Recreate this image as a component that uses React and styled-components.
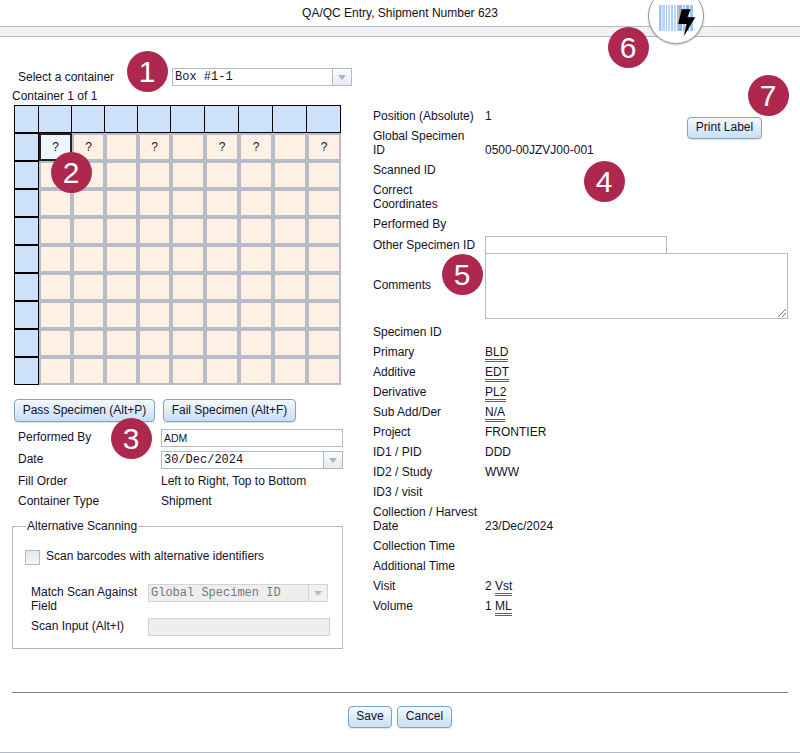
import React from "react";
import styled, { createGlobalStyle } from "styled-components";

const Global = createGlobalStyle`
  html, body { margin: 0; padding: 0; background: #fff; }
  body { font-family: "Liberation Sans", Arial, sans-serif; font-size: 12px; line-height: 14px; color: #12122a; }
  * { box-sizing: border-box; }
`;

const Page = styled.div`
  position: relative;
  width: 800px;
  height: 753px;
  overflow: hidden;
`;
const Title = styled.div`
  height: 26px;
  display: flex;
  align-items: center;
  justify-content: center;
  color: #111;
`;
const Band = styled.div`
  height: 11px;
  background: #f0f2f5;
  border-top: 1px solid #b1b9c9;
  border-bottom: 1px solid #b1b9c9;
`;
const Main = styled.div`
  display: grid;
  grid-template-columns: 361px 1fr;
  height: 656px;
  border-bottom: 1px solid #808080;
  margin: 0 12px;
`;
const Left = styled.div`
  padding-top: 31px;
  width: 345px;
`;
const Right = styled.div`
  padding-top: 69px;
  width: 415px;
`;
const SelectRow = styled.div`
  display: flex;
  align-items: center;
  height: 18px;
  padding-left: 6px;
  gap: 58px;
`;
const Combo = styled.div`
  display: flex;
  width: ${p => p.$w}px;
  height: 18px;
  border: 1px solid ${p => (p.$off ? "#d4d4d4" : "#b1b9c9")};
  background: ${p => (p.$off ? "#eeeeee" : "#fff")};
  font-family: "Liberation Mono", monospace;
  font-size: 12px;
  color: ${p => (p.$off ? "#777" : "#12122a")};
`;
const ComboText = styled.div`
  flex: 1;
  padding-left: 2px;
  line-height: 16px;
  white-space: pre;
`;
const ComboArrow = styled.div`
  width: 19px;
  border-left: 1px solid ${p => (p.$off ? "#d4d4d4" : "#b1b9c9")};
  background: ${p => (p.$off ? "#f1f1f1" : "linear-gradient(#fbfcfd, #e6e9ee)")};
  display: flex;
  align-items: center;
  justify-content: center;
  &::after {
    content: "";
    border-left: 4px solid transparent;
    border-right: 4px solid transparent;
    border-top: 5px solid ${p => (p.$off ? "#bbb" : "#a3b3cc")};
  }
`;
const Caption = styled.div`
  height: 14px;
  margin: 3px 0 2px;
`;
const GridBox = styled.div`
  display: grid;
  grid-template-columns: 24px 33px 33px 33px 33px 34px 34px 34px 34px 34px;
  grid-template-rows: repeat(10, 28px);
  width: 326px;
  margin-left: 2px;
`;
const HeadCell = styled.div`
  background: #cde2f8;
  border: 1px solid #000;
  margin-right: -1px;
`;
const Cell = styled.div`
  background: ${p => (p.$sel ? "#f0f6fd" : "#fef1e4")};
  border: 2px solid ${p => (p.$sel ? "#222" : "#b8bcc8")};
  margin: 0 -1px 0 1px;
  position: relative;
  z-index: ${p => (p.$sel ? 1 : 0)};
  display: flex;
  align-items: center;
  justify-content: center;
  font-size: 12px;
`;
const ButtonRow = styled.div`
  display: flex;
  gap: 8px;
  margin: 14px 0 5px 2px;
`;
const Btn = styled.button`
  height: ${p => p.$h || 23}px;
  width: ${p => p.$w}px;
  padding: 0 0 2px;
  border: 1px solid #7fa3c7;
  border-radius: 4px;
  background: linear-gradient(#f4f8fc, #c7dff5);
  font: 12px/14px "Liberation Sans", Arial, sans-serif;
  color: #12122a;
  box-shadow: 0 1px 1px rgba(0,0,0,.12);
`;
const FormRow = styled.div`
  display: grid;
  grid-template-columns: 143px auto;
  align-items: center;
  height: ${p => p.$h || 20}px;
  padding-left: 6px;
`;
const FormLabel = styled.span`
  padding-bottom: ${p => p.$lift || 0}px;
`;
const TextBox = styled.div`
  width: ${p => p.$w}px;
  height: 18px;
  border: 1px solid ${p => (p.$off ? "#d4d4d4" : "#b1b9c9")};
  background: ${p => (p.$off ? "#eeeeee" : "#fff")};
  padding-left: 2px;
  font-size: 10.5px;
  line-height: 16px;
`;
const Fieldset = styled.fieldset`
  margin: 8px 0 0;
  padding: 0;
  width: 331px;
  height: 130px;
  border: 1px solid #b1b9c9;
`;
const Legend = styled.legend`
  margin-left: 13px;
  padding: 0 1px;
  font-size: 12px;
  line-height: 14px;
`;
const CheckRow = styled.div`
  display: flex;
  gap: 6px;
  margin: 17px 0 0 12px;
  height: 15px;
  line-height: 12px;
`;
const CheckBox = styled.div`
  width: 15px;
  height: 15px;
  border: 1px solid #b1b9c9;
  background: linear-gradient(#dfe8f2, #f6f8fb);
`;
const ScanRow = styled.div`
  display: grid;
  grid-template-columns: 117px auto;
  align-items: start;
  padding-left: 18px;
  margin-top: ${p => p.$mt}px;
  height: ${p => p.$h}px;
`;
const ScanLabel = styled.span`
  padding-top: 1px;
`;
const InfoRow = styled.div`
  display: grid;
  grid-template-columns: 112px 1fr;
  align-items: end;
  padding: 3px 0;
  height: ${p => p.$h || 20}px;
`;
const InputRow = styled(InfoRow)`
  padding: 2px 0 0;
  align-items: center;
`;
const CommentRow = styled(InfoRow)`
  padding: 0 0 3px;
  margin-top: -1px;
  align-items: center;
`;
const Label = styled.div`
  width: 105px;
  white-space: ${p => (p.$nowrap ? "nowrap" : "normal")};
  padding-bottom: ${p => p.$lift || 0}px;
`;
const Area = styled.div`
  position: relative;
  width: 303px;
  height: 66px;
  border: 1px solid #b1b9c9;
  &::after {
    content: "";
    position: absolute;
    right: 1px;
    bottom: 1px;
    width: 9px;
    height: 9px;
    background: linear-gradient(135deg, transparent 50%, #777 50%, #777 58%, transparent 58%, transparent 74%, #777 74%, #777 82%, transparent 82%);
  }
`;
const Coded = styled.span`
  border-bottom: 3px double #9c5208;
`;
const Footer = styled.div`
  display: flex;
  justify-content: center;
  gap: 5px;
  padding-top: 13px;
  height: 59px;
`;
const BottomLine = styled.div`
  height: 1px;
  background: #b1b9c9;
`;
const Badge = styled.div`
  position: absolute;
  left: ${p => p.$x - 20.5}px;
  top: ${p => p.$y - 20.5}px;
  width: 41px;
  height: 41px;
  border-radius: 50%;
  background: #ae274f;
  color: #fff;
  font-size: 30px;
  line-height: 41px;
  text-align: center;
  z-index: 5;
`;
const Logo = styled.div`
  position: absolute;
  left: 648px;
  top: -12px;
  width: 56px;
  height: 56px;
  border-radius: 50%;
  background: #fff;
  border: 1px solid #999;
  box-shadow: 0 1px 2px rgba(0,0,0,.25);
  z-index: 5;
`;
const LogoSvg = styled.svg`
  position: absolute;
  left: 10px;
  top: 16px;
`;
const FloatBtn = styled(Btn)`
  position: absolute;
  left: 687px;
  top: 117px;
  z-index: 4;
`;

const Q = new Set([0, 1, 3, 5, 6, 8]);
const bars = [[0,2,"#9fc6f3"],[2,2,"#d4dcfb"],[4,2,"#b6d2f7"],[7,1,"#9fc6f3"],[9,2,"#c4d4f6"],[12,2,"#a9cdf5"],[15,2,"#c3d6f8"],[18,2,"#9fc6f3"],[20,3,"#86b6ee"],[24,2,"#9fc6f3"],[27,3,"#86b6ee"],[31,3,"#9fc6f3"]];
const BOLT = "M22.7 4.3 H31.7 L28.3 12.3 H36.3 L25 31 L27.7 19 H19.3 Z";

function BarLogo() {
  return (
    <Logo>
      <LogoSvg width="38" height="32" viewBox="0 0 38 32">
        {bars.map(([x, w, c]) => <rect key={x} x={x} y="0" width={w} height="26" fill={c} />)}
        <path d={BOLT} fill="#e8921e" transform="translate(-.7 0)" />
        <path d={BOLT} fill="#000" />
      </LogoSvg>
    </Logo>
  );
}

export default function App() {
  const cells = [];
  for (let r = 0; r < 10; r++) {
    for (let c = 0; c < 10; c++) {
      if (r === 0 || c === 0) cells.push(<HeadCell key={r + "-" + c} />);
      else cells.push(<Cell key={r + "-" + c} $sel={r === 1 && c === 1}>{r === 1 && Q.has(c - 1) ? "?" : ""}</Cell>);
    }
  }
  return (
    <Page>
      <Global />
      <Title>QA/QC Entry, Shipment Number 623</Title>
      <Band />
      <Main>
        <Left>
          <SelectRow>
            <span>Select a container</span>
            <Combo $w={180}><ComboText>Box #1-1</ComboText><ComboArrow /></Combo>
          </SelectRow>
          <Caption>Container 1 of 1</Caption>
          <GridBox>{cells}</GridBox>
          <ButtonRow>
            <Btn $w={141}>Pass Specimen (Alt+P)</Btn>
            <Btn $w={133}>Fail Specimen (Alt+F)</Btn>
          </ButtonRow>
          <FormRow $h={22}><FormLabel $lift={2}>Performed By</FormLabel><TextBox $w={182}>ADM</TextBox></FormRow>
          <FormRow $h={22}><FormLabel $lift={2}>Date</FormLabel><Combo $w={182}><ComboText>30/Dec/2024</ComboText><ComboArrow /></Combo></FormRow>
          <FormRow><FormLabel>Fill Order</FormLabel><span>Left to Right, Top to Bottom</span></FormRow>
          <FormRow><FormLabel>Container Type</FormLabel><span>Shipment</span></FormRow>
          <Fieldset>
            <Legend>Alternative Scanning</Legend>
            <CheckRow><CheckBox /><span>Scan barcodes with alternative identifiers</span></CheckRow>
            <ScanRow $mt={19} $h={28}>
              <ScanLabel>Match Scan Against Field</ScanLabel>
              <Combo $w={180} $off><ComboText>Global Specimen ID</ComboText><ComboArrow $off /></Combo>
            </ScanRow>
            <ScanRow $mt={6} $h={18}>
              <ScanLabel>Scan Input (Alt+I)</ScanLabel>
              <TextBox $w={182} $off />
            </ScanRow>
          </Fieldset>
        </Left>
        <Right>
          <InfoRow><Label $nowrap>Position (Absolute)</Label><span>1</span></InfoRow>
          <InfoRow $h={34}><Label>Global Specimen ID</Label><span>0500-00JZVJ00-001</span></InfoRow>
          <InfoRow><Label>Scanned ID</Label><span /></InfoRow>
          <InfoRow $h={34}><Label>Correct Coordinates</Label><span /></InfoRow>
          <InfoRow><Label>Performed By</Label><span /></InfoRow>
          <InputRow><Label $nowrap>Other Specimen ID</Label><TextBox $w={182} /></InputRow>
          <CommentRow $h={69}><Label $lift={3}>Comments</Label><Area /></CommentRow>
          <InfoRow><Label>Specimen ID</Label><span /></InfoRow>
          <InfoRow><Label>Primary</Label><span><Coded>BLD</Coded></span></InfoRow>
          <InfoRow><Label>Additive</Label><span><Coded>EDT</Coded></span></InfoRow>
          <InfoRow><Label>Derivative</Label><span><Coded>PL2</Coded></span></InfoRow>
          <InfoRow><Label>Sub Add/Der</Label><span><Coded>N/A</Coded></span></InfoRow>
          <InfoRow><Label>Project</Label><span>FRONTIER</span></InfoRow>
          <InfoRow><Label>ID1 / PID</Label><span>DDD</span></InfoRow>
          <InfoRow><Label>ID2 / Study</Label><span>WWW</span></InfoRow>
          <InfoRow><Label>ID3 / visit</Label><span /></InfoRow>
          <InfoRow $h={34}><Label>Collection / Harvest Date</Label><span>23/Dec/2024</span></InfoRow>
          <InfoRow><Label>Collection Time</Label><span /></InfoRow>
          <InfoRow><Label>Additional Time</Label><span /></InfoRow>
          <InfoRow><Label>Visit</Label><span>2 <Coded>Vst</Coded></span></InfoRow>
          <InfoRow><Label>Volume</Label><span>1 <Coded>ML</Coded></span></InfoRow>
        </Right>
      </Main>
      <Footer>
        <Btn $w={44} $h={22}>Save</Btn>
        <Btn $w={55} $h={22}>Cancel</Btn>
      </Footer>
      <BottomLine />
      <FloatBtn $w={75} $h={22}>Print Label</FloatBtn>
      <BarLogo />
      <Badge $x={147} $y={71}>1</Badge>
      <Badge $x={71} $y={172}>2</Badge>
      <Badge $x={131} $y={438}>3</Badge>
      <Badge $x={604} $y={181}>4</Badge>
      <Badge $x={462} $y={274}>5</Badge>
      <Badge $x={628} $y={47}>6</Badge>
      <Badge $x={768} $y={95}>7</Badge>
    </Page>
  );
}
